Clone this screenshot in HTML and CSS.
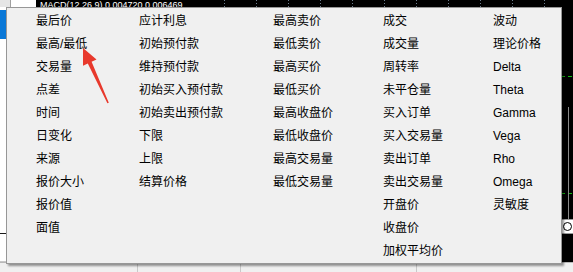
FILE: index.html
```html
<!DOCTYPE html>
<html lang="zh">
<head>
<meta charset="utf-8">
<link rel="stylesheet" href="styles.css">
</head>
<body>
<div class="screen">
  <div class="topstrip">
    <div class="tl"><div class="tl-grey"></div><div class="tl-white"></div></div>
    <div class="macd"><span class="macd-text">MACD(12,26,9) 0.004720 0.006469</span><div class="ticks"></div></div>
  </div>
  <div class="main">
    <div class="leftpane">
      <div class="blue"></div>
      <div class="lp-white"></div>
      <div class="lp-line"></div>
      <div class="lp-rest"></div>
    </div>
    <div class="chart">
      <div class="chart-top"></div>
      <div class="chart-box"><span class="circle"></span></div>
      <div class="chart-bottom"></div>
      <div class="level level-a"></div>
      <div class="level level-b"></div>
      <div class="scale-line"></div>
    </div>
  </div>
  <div class="bottom">
    <div class="bcell b1"></div>
    <div class="bcell b2"></div>
    <div class="bcell b3"></div>
    <div class="bcell b4"></div>
  </div>

  <div class="menu">
    <ul class="col c1">
      <li>最后价</li><li>最高/最低</li><li>交易量</li><li>点差</li><li>时间</li><li>日变化</li><li>来源</li><li>报价大小</li><li>报价值</li><li>面值</li>
    </ul>
    <ul class="col c2">
      <li>应计利息</li><li>初始预付款</li><li>维持预付款</li><li>初始买入预付款</li><li>初始卖出预付款</li><li>下限</li><li>上限</li><li>结算价格</li>
    </ul>
    <ul class="col c3">
      <li>最高卖价</li><li>最低卖价</li><li>最高买价</li><li>最低买价</li><li>最高收盘价</li><li>最低收盘价</li><li>最高交易量</li><li>最低交易量</li>
    </ul>
    <ul class="col c4">
      <li>成交</li><li>成交量</li><li>周转率</li><li>未平仓量</li><li>买入订单</li><li>买入交易量</li><li>卖出订单</li><li>卖出交易量</li><li>开盘价</li><li>收盘价</li><li>加权平均价</li>
    </ul>
    <ul class="col c5">
      <li>波动</li><li>理论价格</li><li>Delta</li><li>Theta</li><li>Gamma</li><li>Vega</li><li>Rho</li><li>Omega</li><li>灵敏度</li>
    </ul>
  </div>

  <svg class="arrow" width="573" height="272" viewBox="0 0 573 272">
    <polygon fill="#e8392c" points="83,48 96.5,59.5 91.6,61.8 108.8,102.8 107.4,103.3 87.8,63.6 83,65.8"/>
  </svg>
</div>
</body>
</html>
```

FILE: styles.css
```css
* { box-sizing: border-box; }
html, body { margin: 0; padding: 0; }
body {
  width: 573px;
  height: 272px;
  overflow: hidden;
  background: #ffffff;
  font-family: "Liberation Sans", "Noto Sans CJK SC", sans-serif;
}
.screen {
  position: relative;
  width: 573px;
  height: 272px;
  overflow: hidden;
  display: flex;
  flex-direction: column;
}

/* top strip */
.topstrip {
  display: flex;
  height: 7px;
  flex: none;
}
.tl {
  width: 36px;
  display: flex;
}
.tl-grey {
  width: 11px;
  background: #e6e6e6;
  border-right: 1px solid #a0a0a0;
}
.tl-white {
  flex: 1;
  background: #ffffff;
}
.macd {
  flex: 1;
  background: #000000;
  display: flex;
  overflow: hidden;
}
.macd-text {
  color: #ffffff;
  font-size: 9px;
  line-height: 10px;
  margin-left: 4px;
  white-space: nowrap;
  flex: none;
}
.ticks {
  flex: 1;
  margin-left: 10px;
  background-image:
    repeating-linear-gradient(to bottom, transparent 0 1px, #000 1px 3px),
    repeating-linear-gradient(to right, transparent 0 31px, #6f7f90 31px 32px);
}

/* main area */
.main {
  flex: 1;
  display: flex;
}
.leftpane {
  width: 36px;
  display: flex;
  flex-direction: column;
  background: #ffffff;
}
.blue {
  height: 29px;
  margin-top: 3px;
  background: #0a78d7;
}
.lp-white { height: 194px; }
.lp-line { height: 1px; background: #1a1a1a; }
.lp-rest {
  flex: 1;
  border-bottom: 1px solid #c8c8c8;
}
.chart {
  flex: 1;
  position: relative;
  display: flex;
  flex-direction: column;
  background: #000000;
}
.chart-top { height: 212px; }
.chart-box {
  height: 15px;
  background: #ffffff;
  border-top: 1px solid #9a9a9a;
  border-bottom: 1px solid #9a9a9a;
  display: flex;
  justify-content: flex-end;
  align-items: center;
}
.circle {
  width: 9px;
  height: 9px;
  border: 1.5px solid #000;
  border-radius: 50%;
  margin-right: 1px;
}
.chart-bottom { flex: 1; }
.level {
  position: absolute;
  left: 0;
  right: 0;
  height: 1px;
  background-image: repeating-linear-gradient(to right, #12b812 0 4px, transparent 4px 7px);
}
.level-a { top: 69px; }
.level-b { top: 186px; }
.scale-line {
  position: absolute;
  right: 4px;
  top: 100px;
  height: 112px;
  width: 1px;
  background: #8a8a8a;
}

/* bottom */
.bottom {
  height: 10px;
  flex: none;
  display: flex;
  background: #f0f0f0;
  border-top: 1px solid #b8b8b8;
}
.bcell { border-right: 1px solid #c9c9c9; }
.b1 { width: 138px; }
.b2 { width: 103px; }
.b3 { width: 176px; }
.b4 { flex: 1; border-right: none; }

/* popup menu */
.menu {
  position: absolute;
  left: 6px;
  top: 7px;
  width: 556px;
  height: 257px;
  background: #f0f0f0;
  border: 1px solid #979797;
  box-shadow: 2px 2px 2px rgba(0, 0, 0, 0.4);
  display: flex;
  padding: 2px 0 0 29px;
}
.col {
  list-style: none;
  margin: 0;
  padding: 0;
}
.col li {
  height: 23px;
  line-height: 23px;
  font-size: 12px;
  color: #000000;
  white-space: nowrap;
}
.c1 { width: 103px; }
.c2 { width: 134px; }
.c3 { width: 110px; }
.c4 { width: 110px; }
.c5 { flex: 1; }

.arrow {
  position: absolute;
  left: 0;
  top: 0;
}
```
